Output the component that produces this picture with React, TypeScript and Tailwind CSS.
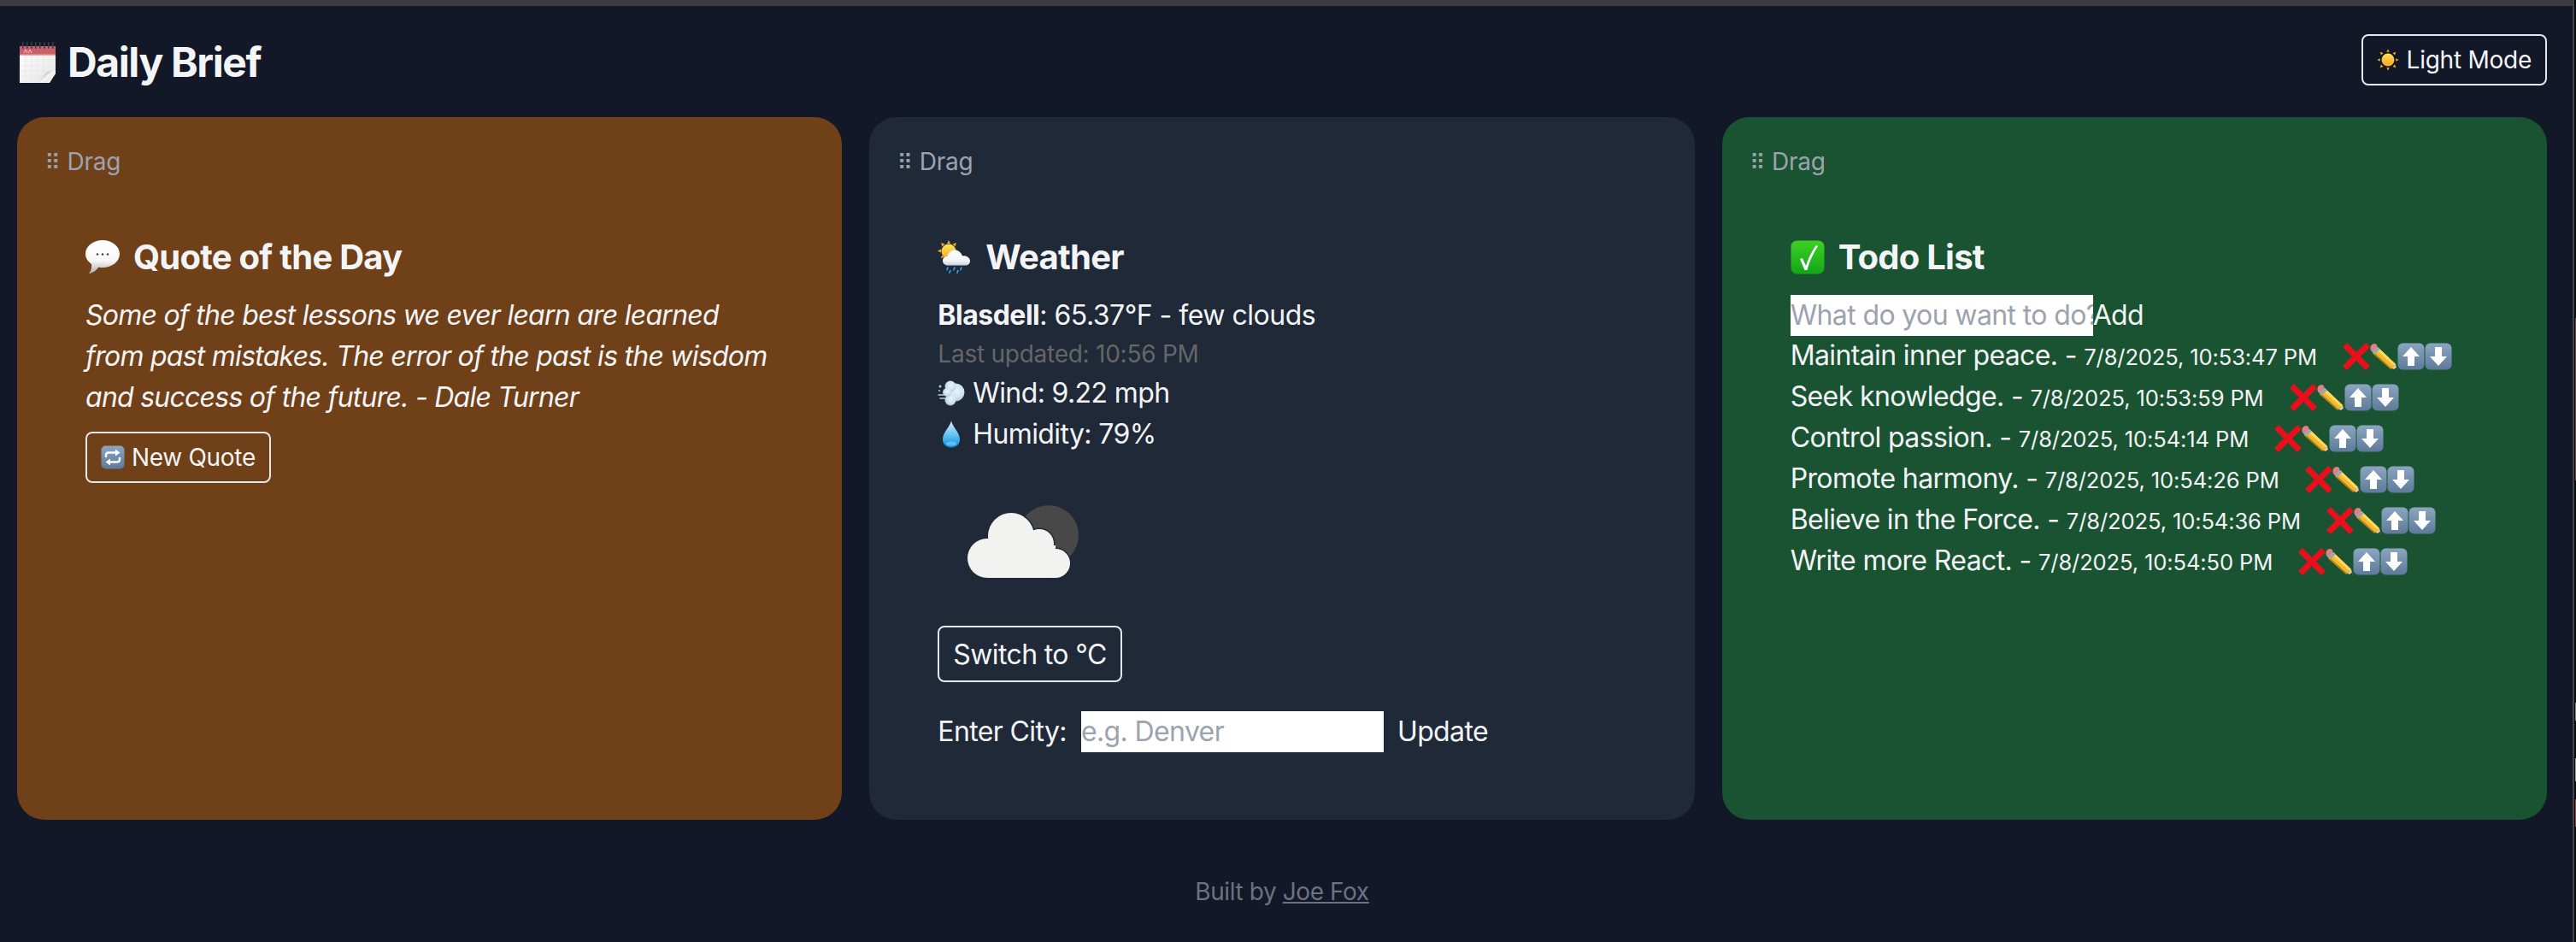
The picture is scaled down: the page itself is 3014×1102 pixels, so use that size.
import React from "react";

function Svg({ className, children, viewBox = "0 0 64 64" }: { className: string; children: React.ReactNode; viewBox?: string }) {
  return (
    <svg viewBox={viewBox} className={`shrink-0 ${className}`} aria-hidden="true">
      {children}
    </svg>
  );
}

function CalendarIcon() {
  return (
    <Svg className="w-[42px] h-[48px]" viewBox="0 0 42 48">
      <defs>
        <linearGradient id="calPage" x1="0" y1="0" x2="1" y2="1">
          <stop offset="0" stopColor="#ffffff" />
          <stop offset="1" stopColor="#e4e4e4" />
        </linearGradient>
        <linearGradient id="calCurl" x1="0" y1="0" x2="1" y2="1">
          <stop offset="0" stopColor="#5f5f5f" />
          <stop offset="0.55" stopColor="#f6f6f6" />
          <stop offset="1" stopColor="#c9c9c9" />
        </linearGradient>
      </defs>
      <path d="M0 10H42V36L34 48H0Z" fill="url(#calPage)" />
      <g stroke="#e6e6e6" strokeWidth="0.7">
        <path d="M7 16V48M14 16V48M21 16V48M28 16V48M35 16V40" />
        <path d="M0 22H42M0 28H42M0 34H42M0 40H36" />
      </g>
      <rect x="0" y="5" width="42" height="11" fill="#c9606a" />
      <rect x="0" y="14.5" width="42" height="1.5" fill="#e8a5aa" />
      <path d="M5 13L7 9L9 13M10 13L12 9L14 13" fill="none" stroke="#f3c9cc" strokeWidth="0.9" />
      <path d="M41 31C38 35 34 33 30 37C27 40 26 44 22 47C28 48 33 48 35 47L42 37Z" fill="url(#calCurl)" />
      <path d="M42 33V37L35 48H30C36 44 38 38 42 33Z" fill="#f0f0f0" />
      {[3, 8, 13, 18, 23, 28, 33, 38].map((x) => (
        <rect key={x} x={x} y="0" width="1.6" height="8" rx="0.8" fill="#3b3f48" />
      ))}
    </Svg>
  );
}

function BubbleIcon() {
  return (
    <Svg className="w-[40px] h-[40px]" viewBox="0 0 40 40">
      <defs>
        <linearGradient id="bubble" x1="0" y1="0" x2="0" y2="1">
          <stop offset="0" stopColor="#ffffff" />
          <stop offset="0.62" stopColor="#f7f7f7" />
          <stop offset="1" stopColor="#aeaeae" />
        </linearGradient>
      </defs>
      <path d="M20 0C31 0 40 7 40 16C40 25 31 32 20 32C18.5 32 17 32 15.5 31.5C13 35 8.5 38.5 4 39C6.5 36 7.5 32 7 28C3 25 0 21 0 16C0 7 9 0 20 0Z" fill="url(#bubble)" />
      <circle cx="14" cy="16.5" r="1.2" fill="#3c3c3c" />
      <circle cx="20" cy="16.5" r="1.2" fill="#3c3c3c" />
      <circle cx="26" cy="16.5" r="1.2" fill="#3c3c3c" />
    </Svg>
  );
}

function WeatherIcon() {
  return (
    <Svg className="w-[40px] h-[40px]" viewBox="0 0 40 40">
      <defs>
        <linearGradient id="wSun" x1="0" y1="0" x2="0" y2="1">
          <stop offset="0" stopColor="#ffe45c" />
          <stop offset="1" stopColor="#f7a823" />
        </linearGradient>
        <linearGradient id="wCloud" x1="0" y1="0" x2="0" y2="1">
          <stop offset="0" stopColor="#ffffff" />
          <stop offset="0.7" stopColor="#f2f4f7" />
          <stop offset="1" stopColor="#c5d0dc" />
        </linearGradient>
      </defs>
      <g fill="#eea92a">
        <path d="M13 0L15 4H11Z" />
        <path d="M4 3L8.5 4.5L5.5 7.5Z" />
        <path d="M22 3L17.5 4.5L20.5 7.5Z" />
        <path d="M0 12.5L4 10.5V14.5Z" />
        <path d="M3.5 21L5.5 17.5L8 20Z" />
      </g>
      <circle cx="13" cy="13" r="8.5" fill="url(#wSun)" />
      <path d="M12 29.5C8.5 29.5 6 27 6 24C6 21 8.5 18.5 11.5 19C12.5 14.5 16.5 11 21 11.5C25 12 28 15 29 18.5C33 17.5 38 20 38 24.5C38 27.5 35.5 29.5 32.5 29.5Z" fill="url(#wCloud)" />
      <g fill="#2f9fe6">
        <path d="M11 31.5L13 31.5L11.5 35.5C10.5 36 10 35 10.2 34.5Z" />
        <path d="M19 31.5L21 31.5L19.5 35.5C18.5 36 18 35 18.2 34.5Z" />
        <path d="M27 31.5L29 31.5L27.5 35.5C26.5 36 26 35 26.2 34.5Z" />
        <path d="M14 35L16 35L14.5 39C13.5 39.5 13 38.5 13.2 38Z" />
        <path d="M23 35L25 35L23.5 39C22.5 39.5 22 38.5 22.2 38Z" />
      </g>
    </Svg>
  );
}

function WindIcon() {
  return (
    <Svg className="w-[32px] h-[32px]" viewBox="0 0 32 32">
      <defs>
        <radialGradient id="wind" cx="0.55" cy="0.4" r="0.65">
          <stop offset="0" stopColor="#e9f3fb" />
          <stop offset="0.6" stopColor="#cfe2f2" />
          <stop offset="1" stopColor="#9fb8cf" />
        </radialGradient>
      </defs>
      <circle cx="21" cy="15" r="10.5" fill="url(#wind)" />
      <circle cx="15" cy="8" r="6.5" fill="url(#wind)" />
      <circle cx="15" cy="24" r="6.5" fill="url(#wind)" />
      <circle cx="11" cy="15" r="5" fill="url(#wind)" />
      <circle cx="3" cy="8" r="1.5" fill="#b7cde0" />
      <circle cx="2" cy="13" r="1" fill="#b7cde0" />
      <path d="M1 18H9M3 22H10" stroke="#b7cde0" strokeWidth="1.4" strokeLinecap="round" />
    </Svg>
  );
}

function DropIcon() {
  return (
    <Svg className="w-[32px] h-[32px]" viewBox="0 0 32 32">
      <defs>
        <linearGradient id="drop" x1="0" y1="0" x2="0" y2="1">
          <stop offset="0" stopColor="#d8f1fc" />
          <stop offset="0.55" stopColor="#5cc0f2" />
          <stop offset="1" stopColor="#0f8fe0" />
        </linearGradient>
      </defs>
      <path d="M16 0.5C18 8 26 14 26 22C26 28 21.5 31.5 16 31.5C10.5 31.5 6 28 6 22C6 14 14 8 16 0.5Z" fill="url(#drop)" />
      <ellipse cx="16" cy="27" rx="6" ry="2.5" fill="#7fd4fb" opacity="0.6" />
    </Svg>
  );
}

function CheckIcon() {
  return (
    <Svg className="w-[40px] h-[40px]" viewBox="0 0 40 40">
      <defs>
        <linearGradient id="check" x1="0" y1="0" x2="0" y2="1">
          <stop offset="0" stopColor="#3fd024" />
          <stop offset="1" stopColor="#12a61a" />
        </linearGradient>
      </defs>
      <rect x="0.5" y="0.5" width="39" height="39" rx="7" fill="url(#check)" />
      <path d="M11 22L14 21L18 30C21 20 26 11 30 6L32 7C27 15 22 25 19.5 35H16.5Z" fill="#fff" />
    </Svg>
  );
}

function CrossIcon() {
  return (
    <Svg className="w-[32px] h-[32px]" viewBox="0 0 32 32">
      <path d="M5 0L16 11L27 0L32 5L21 16L32 27L27 32L16 21L5 32L0 27L11 16L0 5Z" fill="#e8101c" />
    </Svg>
  );
}

function PencilIcon() {
  return (
    <Svg className="w-[32px] h-[32px]" viewBox="0 0 32 32">
      <path d="M9 5L30 25L25 30L4 11Z" fill="#f5b82a" />
      <path d="M9 5L30 25L28 27L6.5 7.5Z" fill="#fdd95e" />
      <path d="M4 11L25 30L24 31L3 12.5Z" fill="#c98412" />
      <path d="M30 25L31.5 31.5L25 30Z" fill="#ecca9c" />
      <path d="M30.3 28.8L31.5 31.5L28.6 31Z" fill="#222" />
      <path d="M6.5 3L12 7.5L5 13.5L1 9Z" fill="#a3a3ac" />
      <path d="M1.5 9.5C-0.5 6.5 0.5 3.5 2.5 2C4.5 0.5 7 0.5 8.5 3.5L3.5 9.5Z" fill="#e27f80" />
    </Svg>
  );
}

function ArrowBox({ dir }: { dir: "up" | "down" }) {
  return (
    <Svg className="w-[32px] h-[32px]" viewBox="0 0 32 32">
      <defs>
        <linearGradient id="steel" x1="0" y1="0" x2="0" y2="1">
          <stop offset="0" stopColor="#8ca6c0" />
          <stop offset="1" stopColor="#5e7a99" />
        </linearGradient>
      </defs>
      <rect x="0.5" y="0.5" width="31" height="31" rx="6" fill="url(#steel)" />
      {dir === "up" ? (
        <path d="M16 5L26 16H20V27H12V16H6Z" fill="#fff" />
      ) : (
        <path d="M16 27L6 16H12V5H20V16H26Z" fill="#fff" />
      )}
    </Svg>
  );
}

function SunIcon() {
  return (
    <Svg className="w-[26px] h-[26px]" viewBox="0 0 28 28">
      <defs>
        <linearGradient id="sun" x1="0" y1="0" x2="0" y2="1">
          <stop offset="0" stopColor="#ffdf55" />
          <stop offset="1" stopColor="#f9a51f" />
        </linearGradient>
      </defs>
      <circle cx="14" cy="14" r="8" fill="url(#sun)" />
      <g fill="#eeb02c">
        <path d="M14 0.5L15.8 4H12.2Z" />
        <path d="M14 27.5L15.8 24H12.2Z" />
        <path d="M0.5 14L4 15.8V12.2Z" />
        <path d="M27.5 14L24 15.8V12.2Z" />
        <path d="M4 4L8 5.3L5.3 8Z" />
        <path d="M24 4L20 5.3L22.7 8Z" />
        <path d="M4 24L8 22.7L5.3 20Z" />
        <path d="M24 24L20 22.7L22.7 20Z" />
      </g>
    </Svg>
  );
}

function RepeatIcon() {
  return (
    <Svg className="w-[28px] h-[32px]" viewBox="0 0 28 32">
      <defs>
        <linearGradient id="steel2" x1="0" y1="0" x2="0" y2="1">
          <stop offset="0" stopColor="#8ca6c0" />
          <stop offset="1" stopColor="#5e7a99" />
        </linearGradient>
      </defs>
      <rect x="0.5" y="2.5" width="27" height="27" rx="5" fill="url(#steel2)" />
      <path d="M6 16V13.5C6 11.5 7.5 10.5 9 10.5H18" fill="none" stroke="#fff" strokeWidth="2.4" />
      <path d="M17 6.5L22.5 10.5L17 14.5Z" fill="#fff" />
      <path d="M22 16V18.5C22 20.5 20.5 21.5 19 21.5H10" fill="none" stroke="#fff" strokeWidth="2.4" />
      <path d="M11 17.5L5.5 21.5L11 25.5Z" fill="#fff" />
    </Svg>
  );
}

function CloudPicture() {
  return (
    <Svg className="w-[200px] h-[200px]" viewBox="0 0 200 200">
      <circle cx="130" cy="94" r="35" fill="#484848" />
      <g fill="#f2f2f0" stroke="#202938" strokeWidth="3">
        <circle cx="86" cy="95" r="27" />
        <circle cx="119" cy="104" r="17" />
        <circle cx="138" cy="127" r="17" />
      </g>
      <g fill="#f2f2f0">
        <circle cx="86" cy="95" r="27" />
        <circle cx="119" cy="104" r="17" />
        <circle cx="58" cy="121" r="23" />
        <circle cx="138" cy="127" r="17" />
        <rect x="58" y="106" width="80" height="38" />
      </g>
    </Svg>
  );
}

function DragHandle() {
  return (
    <div className="h-10 text-[28px] leading-10 tracking-[-0.25px] text-[#9ca3af] font-['Inter','DejaVu_Sans',sans-serif]">
      <span className="text-[26px]">⠿</span> Drag
    </div>
  );
}

function CardHeading({ icon, children }: { icon: React.ReactNode; children: React.ReactNode }) {
  return (
    <h2 className="flex items-center gap-4 h-14 mb-4 text-[40px] leading-14 font-bold tracking-[-0.75px]">
      {icon}
      <span>{children}</span>
    </h2>
  );
}

const todos = [
  { text: "Maintain inner peace.", time: "7/8/2025, 10:53:47 PM" },
  { text: "Seek knowledge.", time: "7/8/2025, 10:53:59 PM" },
  { text: "Control passion.", time: "7/8/2025, 10:54:14 PM" },
  { text: "Promote harmony.", time: "7/8/2025, 10:54:26 PM" },
  { text: "Believe in the Force.", time: "7/8/2025, 10:54:36 PM" },
  { text: "Write more React.", time: "7/8/2025, 10:54:50 PM" },
];

export default function App() {
  return (
    <div className="flex min-h-screen bg-black">
      <div className="w-[3010px] bg-[#121827] text-[#f3f4f6] font-['Inter',sans-serif] text-[32px] leading-12 tracking-[-0.62px]">
        <div className="h-[7px] bg-[#3b3b40]" />
        <div className="w-[3000px] px-5">
          <header className="flex items-start justify-between h-[130px] pt-[33px]">
            <h1 className="flex items-center gap-[14px] mt-[3px] text-[48px] leading-[60px] font-bold tracking-[-1.4px]">
              <span className="pl-[3px] flex"><CalendarIcon /></span>
              <span>Daily Brief</span>
            </h1>
            <button className="flex items-center gap-[9px] h-[60px] px-4 border-2 border-[#e5e7eb] rounded-lg text-[28px] leading-10 tracking-[-0.25px]">
              <SunIcon />
              Light Mode
            </button>
          </header>

          <main className="grid grid-cols-3 gap-8">
            <section className="h-[822px] rounded-[32px] bg-[#704018] p-8">
              <DragHandle />
              <div className="pt-16 px-12">
                <CardHeading icon={<BubbleIcon />}>Quote of the Day</CardHeading>
                <p className="italic tracking-[-0.75px]">
                  Some of the best lessons we ever learn are learned from past mistakes. The error of the past is the wisdom and success of the future. - Dale Turner
                </p>
                <button className="flex items-center gap-[8px] h-[60px] mt-4 px-4 border-2 border-[#e5e7eb] rounded-lg text-[28px] leading-10 tracking-[-0.3px]">
                  <RepeatIcon />
                  New Quote
                </button>
              </div>
            </section>

            <section className="h-[822px] rounded-[32px] bg-[#202938] p-8">
              <DragHandle />
              <div className="pt-16 px-12">
                <CardHeading icon={<WeatherIcon />}>Weather</CardHeading>
                <p className="tracking-[-0.5px]"><strong className="font-bold">Blasdell</strong>: 65.37°F - few clouds</p>
                <p className="text-[28px] leading-[43px] tracking-[-0.25px] text-[#666666]">Last updated: 10:56 PM</p>
                <p className="flex items-center gap-[9px]"><WindIcon />Wind: 9.22 mph</p>
                <p className="flex items-center gap-[9px]"><DropIcon />Humidity: 79%</p>
                <CloudPicture />
                <button className="block h-[66px] pt-[2px] px-4 border-2 border-[#e5e7eb] rounded-lg">Switch to °C</button>
                <div className="flex items-center mt-[34px] h-12">
                  <label>Enter City:</label>
                  <input className="w-[354px] h-12 ml-[17px] bg-white text-[#111827] outline-none placeholder:text-[#9ca3af]" placeholder="e.g. Denver" />
                  <button className="ml-4">Update</button>
                </div>
              </div>
            </section>

            <section className="h-[822px] rounded-[32px] bg-[#195331] p-8">
              <DragHandle />
              <div className="pt-16 px-12">
                <CardHeading icon={<CheckIcon />}>Todo List</CardHeading>
                <div className="flex h-12">
                  <input className="w-[354px] h-12 bg-white text-[#111827] outline-none placeholder:text-[#9ca3af]" placeholder="What do you want to do?" />
                  <button>Add</button>
                </div>
                <ul>
                  {todos.map((t) => (
                    <li key={t.time} className="flex items-center h-12 whitespace-nowrap">
                      <span>{t.text} - <span className="text-[25.6px] tracking-[-0.15px]">{t.time}</span></span>
                      <span className="flex ml-[30px]">
                        <CrossIcon />
                        <PencilIcon />
                        <ArrowBox dir="up" />
                        <ArrowBox dir="down" />
                      </span>
                    </li>
                  ))}
                </ul>
              </div>
            </section>
          </main>

          <footer className="mt-[64px] text-center text-[28px] leading-10 tracking-[-0.4px] text-[#6b7280]">
            Built by <a className="underline" href="#">Joe Fox</a>
          </footer>
        </div>
      </div>
      <div className="w-[2px] bg-[#3f434d]" />
      <div className="w-[1px] bg-[#0a0a0a]" />
      <div className="w-[1px] flex flex-col bg-[#0a0a0a]">
        <div className="h-[372px] shrink-0" />
        <div className="h-[190px] shrink-0 bg-[#6b4a3a]" />
        <div className="h-[260px] shrink-0" />
        <div className="h-[21px] shrink-0 bg-[#8a8a8a]" />
        <div className="h-[44px] shrink-0" />
        <div className="h-[27px] shrink-0 bg-[#9a9a9a]" />
        <div className="h-[21px] shrink-0" />
        <div className="h-[32px] shrink-0 bg-[#b0452e]" />
      </div>
    </div>
  );
}
